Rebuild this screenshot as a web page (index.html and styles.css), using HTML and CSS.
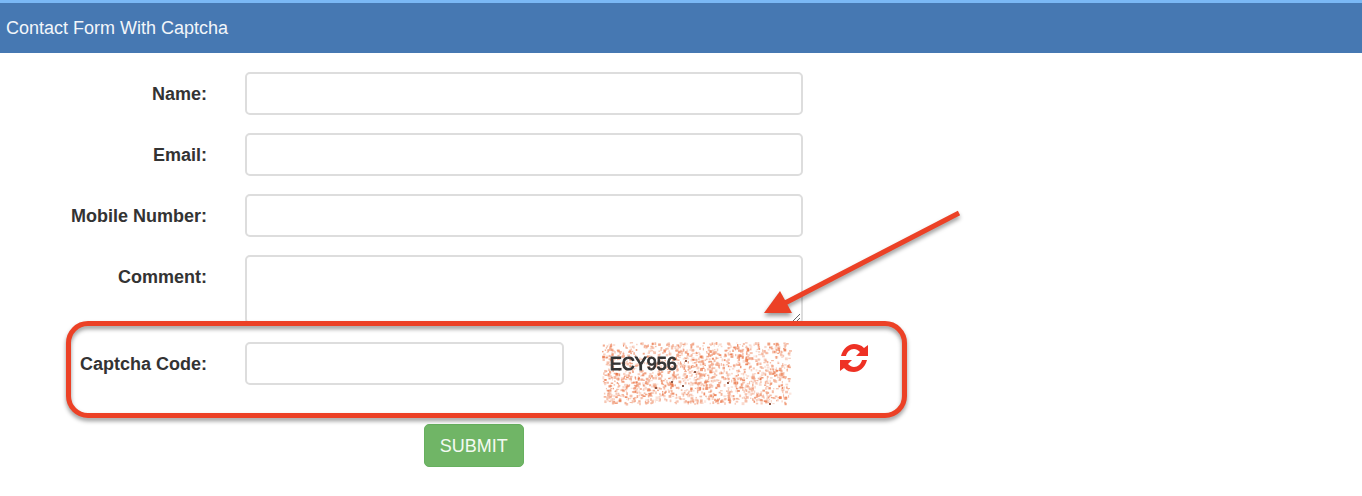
FILE: index.html
```html
<!DOCTYPE html>
<html lang="en">
<head>
	<meta charset="utf-8">
	<title>Contact Form With Captcha</title>
	<link rel="stylesheet" href="styles.css">
</head>
<body>
	<header class="heading">Contact Form With Captcha</header>

	<form class="contact" onsubmit="return false">
		<div class="row">
			<label for="name">Name:</label>
			<input type="text" id="name">
		</div>
		<div class="row">
			<label for="email">Email:</label>
			<input type="text" id="email">
		</div>
		<div class="row">
			<label for="mobile">Mobile Number:</label>
			<input type="text" id="mobile">
		</div>
		<div class="row">
			<label for="comment">Comment:</label>
			<textarea id="comment"></textarea>
		</div>
		<div class="row captcha-row">
			<label for="captcha">Captcha Code:</label>
			<input type="text" id="captcha">
			<div class="captcha">
				<canvas id="noise" width="190" height="64"></canvas>
				<span class="code">ECY956</span>
			</div>
			<button type="button" class="refresh" aria-label="Refresh captcha" onclick="drawNoise()">
				<svg width="28" height="28" viewBox="0 0 28 28">
					<g id="half">
						<path d="M1 12C3 4 9 0 14 0C18 0 21 1 24 4L28 1V12H16L20 8C18 6 16 5 14 5C10 5 7 8 6 12z" fill="#ee3124"/>
					</g>
					<use href="#half" transform="rotate(180 14 14)"/>
				</svg>
			</button>
			<div class="highlight"></div>
			<svg class="arrow" width="210" height="120" viewBox="0 0 210 120">
				<path d="M204 10L30 100" stroke="#ec4126" stroke-width="5"/>
				<path d="M9 110L25 88L37 110z" fill="#ec4126"/>
			</svg>
		</div>
		<div class="row">
			<div class="actions">
				<button type="submit" class="submit">SUBMIT</button>
			</div>
		</div>
	</form>

	<script>
		let seed = 956;

		function rand() {
			seed = (seed * 16807) % 2147483647;
			return seed / 2147483647;
		}

		function drawNoise() {
			let canvas = document.getElementById("noise");
			let ctx = canvas.getContext("2d");
			ctx.clearRect(0, 0, canvas.width, canvas.height);
			for (let i = 0; i < 1500; i++) {
				let light = 55 + rand() * 25;
				ctx.fillStyle = "hsla(17, 80%, " + light + "%, " + (0.3 + rand() * 0.5) + ")";
				ctx.fillRect(rand() * 187, rand() * 61, 1 + rand() * 2, 1 + rand() * 2);
			}
			// a few dark specks
			ctx.fillStyle = "#8f5a48";
			[[83, 18], [92, 29], [69, 39], [80, 43], [53, 45], [125, 40], [167, 61]].forEach(function (p) {
				ctx.fillRect(p[0], p[1], 2, 2);
			});
		}

		drawNoise();
	</script>
</body>
</html>
```
FILE: styles.css
```css
* {
  box-sizing: border-box;
}

body {
  margin: 0;
  font-family: "Liberation Sans", Arial, sans-serif;
  font-size: 18px;
  line-height: 24px;
  color: #333;
  background-color: #fff;
}

.heading {
  padding: 13px 6px;
  border-top: 3px solid #7ab8f5;
  background-color: #4678b2;
  color: #f2f6fa;
}

.contact {
  display: flex;
  flex-direction: column;
  gap: 18px;
  padding: 19px 0;
}

.row {
  display: grid;
  grid-template-columns: 15.2% 41%;
  column-gap: 38px;
  align-items: start;
}

.row label {
  padding-top: 10px;
  text-align: right;
  font-weight: bold;
}

input,
textarea {
  display: block;
  width: 100%;
  height: 43px;
  padding: 8px 14px;
  border: 2px solid #ddd;
  border-radius: 5px;
  background-color: #fff;
  font: inherit;
}

textarea {
  height: 69px;
  resize: vertical;
}

.captcha-row {
  position: relative;
  grid-template-columns: 15.2% 23.4% 190px 38px;
}

.captcha {
  position: relative;
  height: 64px;
}

.captcha canvas {
  display: block;
}

.code {
  position: absolute;
  top: 10px;
  left: 8px;
  color: #333;
  -webkit-text-stroke: 1px #333;
}

.refresh {
  margin: 2px 0 0 10px;
  padding: 0;
  border: 0;
  background: none;
}

.refresh svg {
  display: block;
}

/* marks the captcha part of the form */
.highlight {
  position: absolute;
  top: -21px;
  left: 66px;
  width: 841px;
  height: 97px;
  border: 5px solid #ec4126;
  border-radius: 22px;
  filter: drop-shadow(0 3px 2px rgba(0, 0, 0, 0.4));
  pointer-events: none;
}

.arrow {
  position: absolute;
  top: -139px;
  left: 755px;
  filter: drop-shadow(0 3px 2px rgba(0, 0, 0, 0.4));
  pointer-events: none;
}

.actions {
  grid-column: 2;
  padding-left: 32%;
}

.submit {
  height: 43px;
  padding: 0 15px;
  border: 1px solid #67b05f;
  border-radius: 5px;
  background-color: #70b566;
  color: #f4faf2;
  font: inherit;
}
```
